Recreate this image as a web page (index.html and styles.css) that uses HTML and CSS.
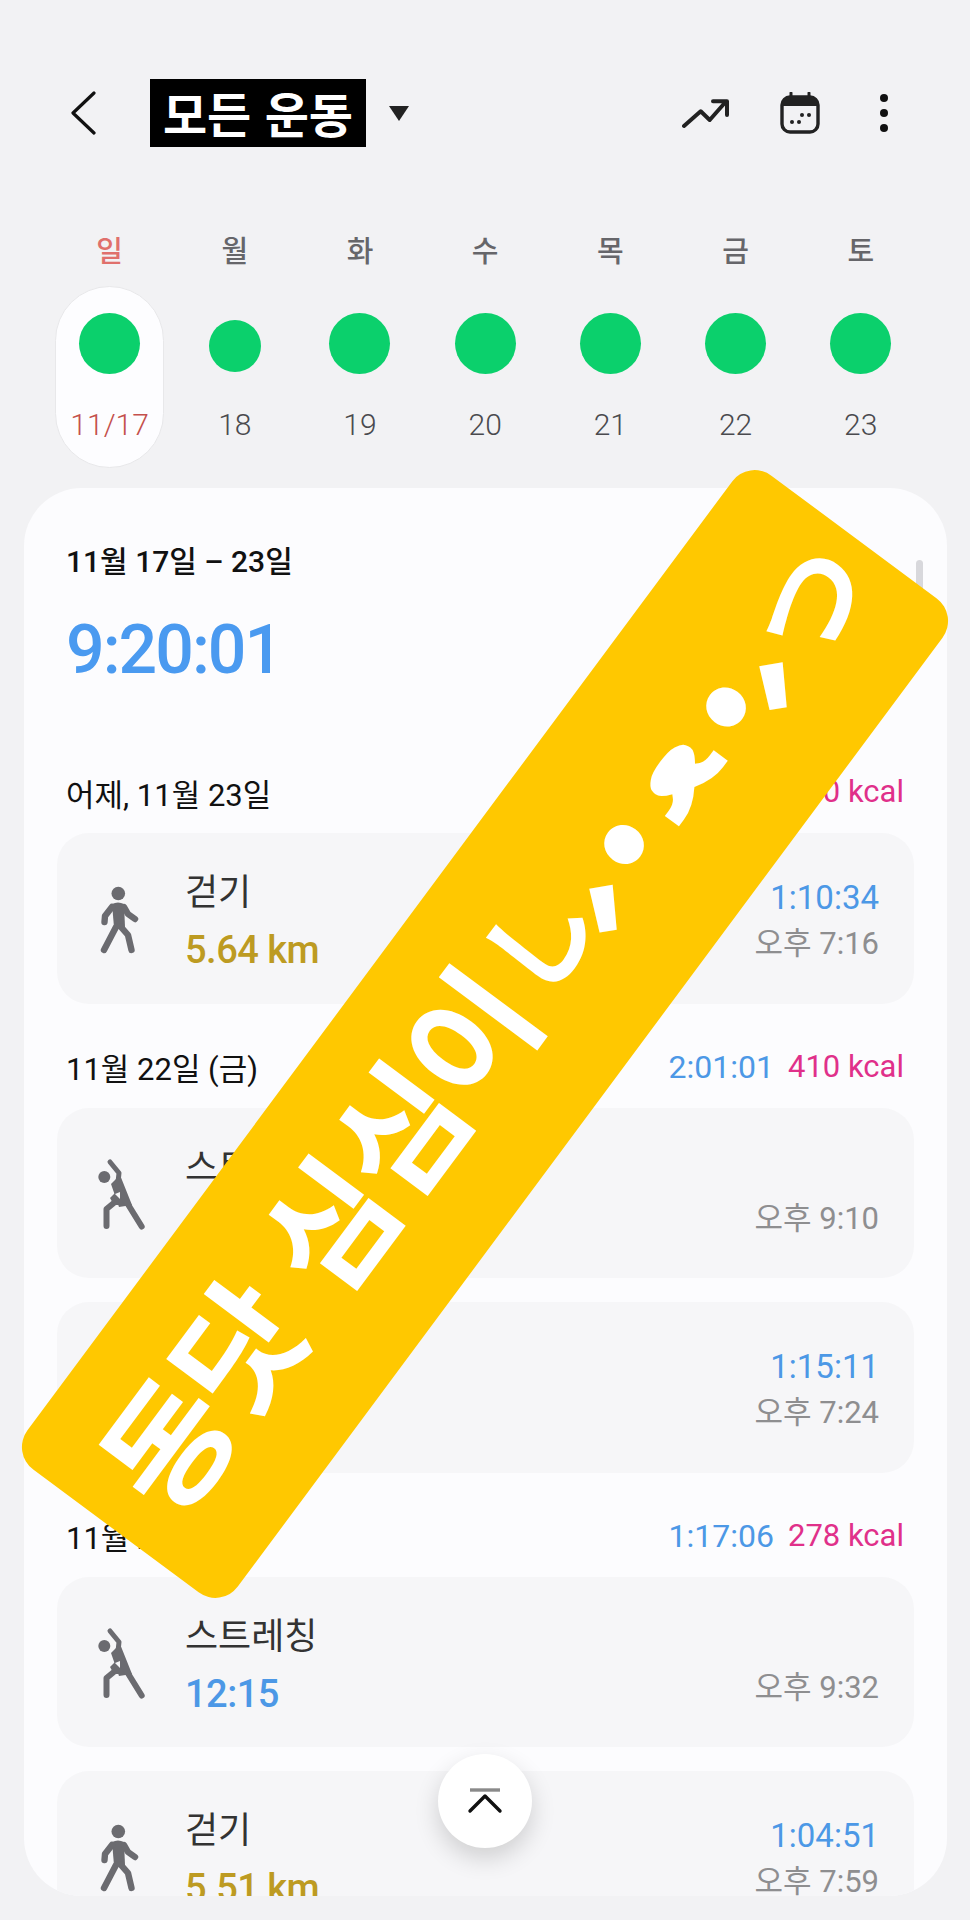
FILE: index.html
```html
<!DOCTYPE html>
<html lang="ko">
<head>
    <meta charset="UTF-8">
    <meta name="viewport" content="width=device-width, initial-scale=1.0">
    <title>모든 운동</title>
    <link rel="stylesheet" href="styles.css">
</head>
<body>
    <svg class="defs" width="0" height="0">
        <symbol id="walk" viewBox="0 0 52 76">
            <circle cx="23.3" cy="13.5" r="6.8" fill="currentColor"/>
            <path d="M17 24 Q23 21 29 24 L30 47 L19 47 Z" fill="currentColor"/>
            <path d="M17 27 L10 36 L9.5 42 M29 27 L33 34 L40 39 M21 47 L9 70 M26 47 L33 55 L36.5 70" fill="none" stroke="currentColor" stroke-width="6.4" stroke-linecap="round" stroke-linejoin="round"/>
        </symbol>
        <symbol id="stretch" viewBox="0 0 52 76">
            <circle cx="9.3" cy="22" r="6" fill="currentColor"/>
            <path d="M15 7 L24 18 L22.5 32" fill="none" stroke="currentColor" stroke-width="5" stroke-linecap="round" stroke-linejoin="round"/>
            <path d="M16 29 L25 20 L37 50 L24 52 Z" fill="currentColor"/>
            <path d="M26 38 L46.7 71.5 M20 47 L11.5 54 L11.5 71" fill="none" stroke="currentColor" stroke-width="6" stroke-linecap="round" stroke-linejoin="round"/>
            <path d="M15 43 L24 34 L28 50 L19 50 Z" fill="currentColor"/>
            <path d="M20 39 L25 37 L25 44 Z" fill="#f6f6f8"/>
        </symbol>
    </svg>

    <div class="screen">
        <div class="topbar">
            <svg class="back" width="26" height="44" viewBox="0 0 26 44"><path d="M24 2 L3 22 L24 42" fill="none" stroke="#111" stroke-width="3.2" stroke-linecap="round" stroke-linejoin="round"/></svg>
            <h1 class="title">모든 운동</h1>
            <span class="caret"></span>
            <div class="actions">
                <svg class="trend" width="48" height="32" viewBox="0 0 48 32"><path d="M2 29 L18.7 14.3 L27.7 23 L44 4.5 M31 4.3 L45 4.3 L45 18" fill="none" stroke="#222" stroke-width="4" stroke-linecap="round" stroke-linejoin="round"/></svg>
                <svg class="cal" width="40" height="42" viewBox="0 0 40 42">
                    <path d="M11 1 L11 7 M29 1 L29 7" stroke="#222" stroke-width="3" stroke-linecap="round"/>
                    <rect x="2" y="5" width="36" height="35" rx="8" fill="none" stroke="#222" stroke-width="3.4"/>
                    <path d="M2 14 L2 12 Q2 5 10 5 L30 5 Q38 5 38 12 L38 14 Z" fill="#222"/>
                    <circle cx="12" cy="30" r="2" fill="#222"/><circle cx="19" cy="30" r="2" fill="#222"/>
                    <circle cx="22" cy="23" r="2" fill="#222"/><circle cx="29" cy="23" r="2" fill="#222"/>
                </svg>
                <div class="more"><i></i><i></i><i></i></div>
            </div>
        </div>

        <div class="week">
            <div class="day sun"><div class="wd">일</div><div class="cell on"><span class="dot"></span><span class="num">11/17</span></div></div>
            <div class="day"><div class="wd">월</div><div class="cell"><span class="dot small"></span><span class="num">18</span></div></div>
            <div class="day"><div class="wd">화</div><div class="cell"><span class="dot"></span><span class="num">19</span></div></div>
            <div class="day"><div class="wd">수</div><div class="cell"><span class="dot"></span><span class="num">20</span></div></div>
            <div class="day"><div class="wd">목</div><div class="cell"><span class="dot"></span><span class="num">21</span></div></div>
            <div class="day"><div class="wd">금</div><div class="cell"><span class="dot"></span><span class="num">22</span></div></div>
            <div class="day"><div class="wd">토</div><div class="cell"><span class="dot"></span><span class="num">23</span></div></div>
        </div>

        <div class="panel">
            <div class="summary">
                <div class="range">11월 17일 – 23일</div>
                <div class="total">9:20:01</div>
            </div>

            <div class="sec first">
                <span>어제, 11월 23일</span>
                <span class="sec-r"><b class="blue">1:10:34</b><b class="pink">250 kcal</b></span>
            </div>
            <div class="row">
                <svg class="ico"><use href="#walk"/></svg>
                <div class="main"><div class="name">걷기</div><div class="val gold">5.64 km</div></div>
                <div class="side"><div class="dur">1:10:34</div><div class="when">오후 7:16</div></div>
            </div>

            <div class="sec">
                <span>11월 22일 (금)</span>
                <span class="sec-r"><b class="blue">2:01:01</b><b class="pink">410 kcal</b></span>
            </div>
            <div class="row">
                <svg class="ico"><use href="#stretch"/></svg>
                <div class="main"><div class="name">스트레칭</div><div class="val blue">45:50</div></div>
                <div class="side"><div class="dur"></div><div class="when">오후 9:10</div></div>
            </div>
            <div class="row">
                <svg class="ico"><use href="#walk"/></svg>
                <div class="main"><div class="name">걷기</div><div class="val gold">6.02 km</div></div>
                <div class="side"><div class="dur">1:15:11</div><div class="when">오후 7:24</div></div>
            </div>

            <div class="sec">
                <span>11월 21일 (목)</span>
                <span class="sec-r"><b class="blue">1:17:06</b><b class="pink">278 kcal</b></span>
            </div>
            <div class="row">
                <svg class="ico"><use href="#stretch"/></svg>
                <div class="main"><div class="name">스트레칭</div><div class="val blue">12:15</div></div>
                <div class="side"><div class="dur"></div><div class="when">오후 9:32</div></div>
            </div>
            <div class="row">
                <svg class="ico"><use href="#walk"/></svg>
                <div class="main"><div class="name">걷기</div><div class="val gold">5.51 km</div></div>
                <div class="side"><div class="dur">1:04:51</div><div class="when">오후 7:59</div></div>
            </div>

            <div class="scrollbar"></div>
        </div>

        <button class="to-top">
            <svg width="36" height="28" viewBox="0 0 36 28"><path d="M3 3 L33 3" stroke="#8a8a8a" stroke-width="3.4"/><path d="M3 24 L18 9 L33 24" fill="none" stroke="#111" stroke-width="3.4" stroke-linecap="round" stroke-linejoin="round"/></svg>
        </button>

        <div class="banner">
            <span class="hello">동닷 심심이</span>
            <span class="kao"><span>し</span><span>´</span><span>•</span><span>ﻌ</span><span>•</span><span>´</span><span>つ</span></span>
        </div>
    </div>
</body>
</html>
```

FILE: styles.css
```css
* {
    margin: 0;
    padding: 0;
    box-sizing: border-box;
}

html, body {
    width: 970px;
    height: 1920px;
    overflow: hidden;
}

body {
    font-family: Roboto, "Noto Sans CJK KR", sans-serif;
    background: #f2f2f4;
    color: #111;
}

.defs {
    position: absolute;
}

.screen {
    position: relative;
    height: 1920px;
    overflow: hidden;
}

/* top bar */
.topbar {
    position: relative;
    display: flex;
    align-items: center;
    height: 68px;
    padding-left: 70px;
    top: 79px;
    margin-bottom: 79px;
}

.title {
    margin-left: 54px;
    width: 216px;
    height: 68px;
    line-height: 66px;
    text-align: center;
    background: #000;
    color: #fff;
    font-family: "Noto Sans CJK KR", sans-serif;
    font-size: 48px;
    font-weight: 700;
}

.caret {
    margin-left: 23px;
    border-left: 10.5px solid transparent;
    border-right: 10.5px solid transparent;
    border-top: 15px solid #222;
}

.actions {
    position: absolute;
    left: 682px;
    top: 13px;
    display: flex;
    align-items: center;
}

.cal {
    margin-left: 50px;
}

.more {
    margin-left: 60px;
    display: flex;
    flex-direction: column;
    gap: 6.8px;
}

.more i {
    display: block;
    width: 8px;
    height: 8px;
    border-radius: 50%;
    background: #111;
}

/* week strip */
.week {
    display: grid;
    grid-template-columns: repeat(7, 125.2px);
    padding-left: 47px;
    padding-top: 85px;
}

.day {
    display: flex;
    flex-direction: column;
    align-items: center;
}

.wd {
    height: 40px;
    line-height: 40px;
    font-size: 29px;
    font-weight: 500;
    color: #66666a;
    margin-bottom: 14px;
}

.sun .wd {
    color: #e0706c;
}

.cell {
    width: 109px;
    height: 182px;
    border-radius: 55px;
    border: 1px solid transparent;
    display: flex;
    flex-direction: column;
    align-items: center;
    padding-top: 26px;
}

.cell.on {
    background: #fdfdff;
    border-color: #e8e8ea;
}

.dot {
    width: 61px;
    height: 61px;
    border-radius: 50%;
    background: #0bd06c;
    margin-bottom: 31px;
}

.dot.small {
    width: 52px;
    height: 52px;
    margin-top: 7px;
    margin-bottom: 33px;
}

.num {
    line-height: 40px;
    font-size: 30px;
    font-weight: 300;
    color: #4a4a4e;
}

.sun .num {
    color: #c4504c;
}

/* list panel */
.panel {
    position: relative;
    width: 923px;
    height: 1408px;
    margin: 20px 0 0 24px;
    padding: 0 33px;
    background: #fcfcfe;
    border-radius: 58px;
    overflow: hidden;
}

.summary {
    padding: 54px 0 0 9px;
}

.range {
    height: 40px;
    line-height: 40px;
    font-size: 30px;
    font-weight: 500;
}

.total {
    margin-top: 28px;
    line-height: 80px;
    height: 78px;
    font-size: 68px;
    font-weight: 500;
    letter-spacing: -2px;
    color: #4a9af0;
}

.sec {
    display: flex;
    justify-content: space-between;
    align-items: center;
    height: 80px;
    padding: 0 10px 2px 9px;
    font-size: 31px;
}

.sec.first {
    height: 145px;
    padding: 63px 10px 0 9px;
}

.sec-r {
    display: flex;
    gap: 14px;
}

.sec-r b {
    font-weight: 400;
}

.sec-r .blue {
    font-size: 32px;
}

.blue {
    color: #4c98e6;
}

.pink {
    color: #e0308a;
}

.gold {
    color: #bd9b22;
}

.row {
    display: flex;
    height: 170.5px;
    margin-bottom: 24px;
    background: #f6f6f8;
    border-radius: 32px;
}

.ico {
    flex: none;
    width: 52px;
    height: 76px;
    margin: 47px 38px 0 38px;
    color: #6b6b70;
}

.main {
    padding-top: 36px;
}

.name {
    height: 48px;
    line-height: 48px;
    font-size: 36px;
    color: #333;
}

.val {
    height: 60px;
    margin-top: 5px;
    line-height: 56px;
    font-size: 38px;
    font-weight: 500;
    letter-spacing: -0.5px;
}

.side {
    margin-left: auto;
    padding: 45px 35px 0 0;
    text-align: right;
}

.dur {
    height: 40px;
    line-height: 40px;
    font-size: 33px;
    color: #4c98e6;
}

.when {
    margin-top: 6px;
    height: 40px;
    line-height: 40px;
    font-size: 31px;
    color: #8e8e90;
}

.scrollbar {
    position: absolute;
    right: 24px;
    top: 72px;
    width: 7px;
    height: 80px;
    border-radius: 4px;
    background: #d8d8dc;
}

.to-top {
    position: absolute;
    left: 438px;
    top: 1754px;
    width: 94px;
    height: 94px;
    border: none;
    border-radius: 50%;
    background: #fff;
    box-shadow: 0 10px 24px rgba(0,0,0,0.16);
    display: flex;
    align-items: center;
    justify-content: center;
}

/* sticker across the list */
.banner {
    position: absolute;
    left: -134px;
    top: 903px;
    width: 1238px;
    height: 262px;
    padding-left: 40px;
    display: flex;
    align-items: center;
    border-radius: 28px;
    background: #ffc800;
    color: #fff;
    font-family: "Noto Sans CJK KR", "DejaVu Sans", sans-serif;
    font-size: 132px;
    font-weight: 700;
    white-space: nowrap;
    transform: rotate(-53.4deg);
}

.hello {
    position: relative;
    top: -18px;
    margin-right: 15px;
    letter-spacing: -3px;
}

.kao {
    display: flex;
    align-items: center;
}

.kao span {
    position: relative;
    text-align: center;
    flex: none;
}

.kao span:nth-child(1) { width: 80px; top: -20px; left: -6px; font-size: 104px; }
.kao span:nth-child(2) { width: 56px; top: 80px; left: -34px; font-size: 170px; }
.kao span:nth-child(3) { width: 74px; top: -20px; }
.kao span:nth-child(4) { width: 90px; top: -29px; left: 6px; font-size: 140px; line-height: 1; }
.kao span:nth-child(5) { width: 88px; top: -20px; }
.kao span:nth-child(6) { width: 34px; top: 84px; left: -62px; font-size: 170px; }
.kao span:nth-child(7) { width: 124px; top: -2px; left: -6px; font-size: 110px; }
```
